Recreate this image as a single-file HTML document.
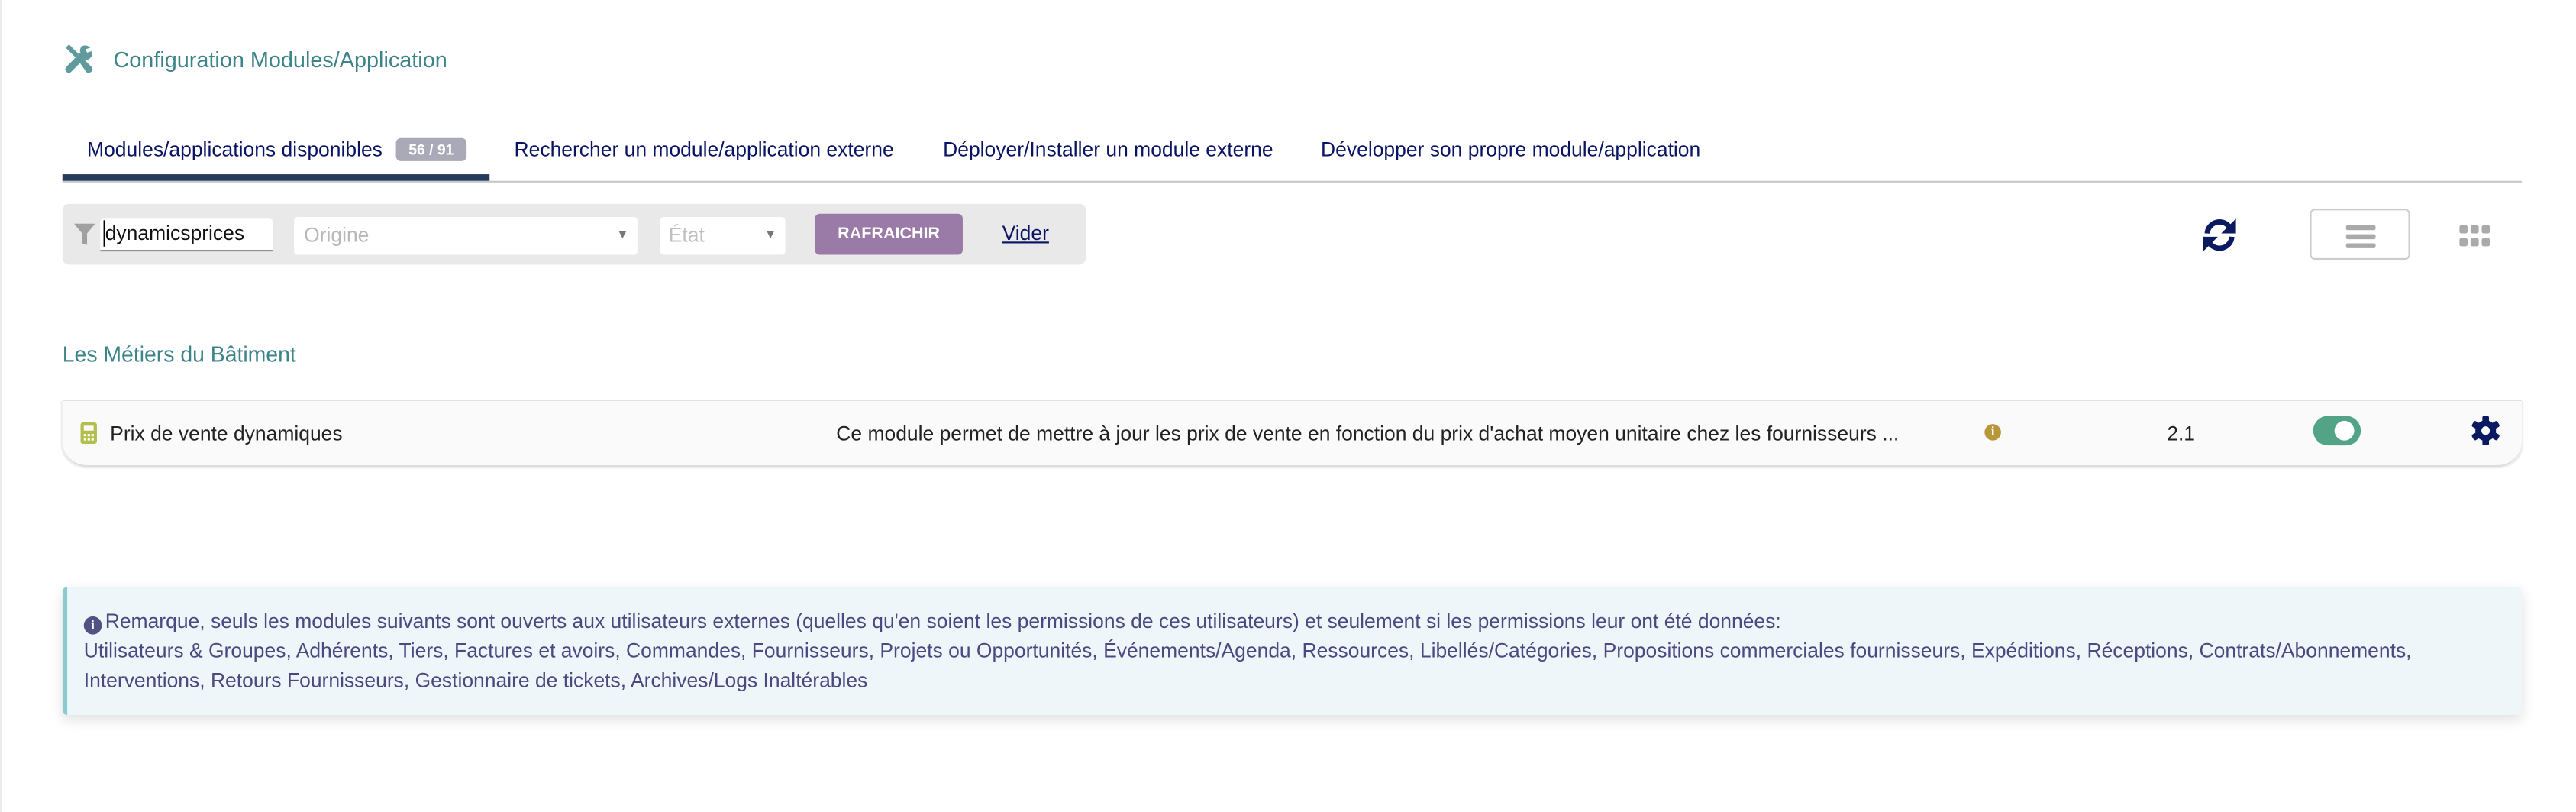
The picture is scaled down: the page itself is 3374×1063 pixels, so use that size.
<!DOCTYPE html>
<html><head><meta charset="utf-8"><style>
html,body{margin:0;padding:0;background:#fff;width:3374px;height:1062px;overflow:hidden}
#w{position:absolute;left:0;top:0;width:1568px;height:494px;transform:scale(2.1518);transform-origin:0 0;font-family:"Liberation Sans",Arial,sans-serif}
.a{position:absolute;white-space:nowrap}
.tab{color:#0a1464;font-size:12.3px;top:84px}
</style></head><body><div id="w">
<div class="a" style="left:0;top:0;width:1px;height:494px;background:#ececec"></div>
<svg class="a" style="left:38px;top:26px" width="20" height="20" viewBox="0 0 20 20"><g fill="#5f9a9c"><path d="M2 3l2-2 6 6 -2 2z"/><path d="M9 10l2-2 7 7q1 2-1 3q-2 1-3-1z"/><path d="M12 2q3-1 5 1l-3 1 1 2 3-1q1 3-2 5q-2 1-3 0l-8 8q-2 1-3-1q-1-1 1-3l8-8q-1-2 1-4z"/></g></svg>
<div class="a" style="left:69px;top:29px;font-size:13.4px;color:#3d8489">Configuration Modules/Application</div>
<div class="a tab" style="left:53px">Modules/applications disponibles</div>
<div class="a" style="left:241px;top:84px;width:43px;height:14px;background:#a9a9b8;border-radius:3px;color:#fff;font-size:9px;font-weight:bold;text-align:center;line-height:14px">56 / 91</div>
<div class="a tab" style="left:313px">Rechercher un module/application externe</div>
<div class="a tab" style="left:574px">Déployer/Installer un module externe</div>
<div class="a tab" style="left:804px">Développer son propre module/application</div>
<div class="a" style="left:38px;top:109.5px;width:1497px;height:1px;background:#c8c8c8"></div>
<div class="a" style="left:38px;top:106px;width:260px;height:4px;background:#263a5c"></div>
<div class="a" style="left:38px;top:124px;width:623px;height:37px;background:#e9e9e9;border-radius:4px"></div>
<svg class="a" style="left:45px;top:136px" width="13" height="13" viewBox="0 0 13 13"><path d="M0 0h13l-5 6v7l-3-1v-6z" fill="#a0a0a0"/></svg>
<div class="a" style="left:61px;top:133px;width:105px;height:19px;background:#fff;border-bottom:1px solid #777;border-radius:2px 2px 0 0"></div>
<div class="a" style="left:64px;top:135px;font-size:12.3px;color:#111">dynamicsprices</div>
<div class="a" style="left:63px;top:134px;width:1px;height:16px;background:#000"></div>
<div class="a" style="left:179px;top:132px;width:209px;height:23px;background:#fff;border-radius:2px"></div>
<div class="a" style="left:185px;top:136px;font-size:12.3px;color:#b8b8b8">Origine</div>
<div class="a" style="left:375px;top:138px;font-size:8px;color:#777">▼</div>
<div class="a" style="left:402px;top:132px;width:76px;height:23px;background:#fff;border-radius:2px"></div>
<div class="a" style="left:407px;top:136px;font-size:12.3px;color:#c0c0c0">État</div>
<div class="a" style="left:465px;top:138px;font-size:8px;color:#777">▼</div>
<div class="a" style="left:496px;top:130px;width:90px;height:25px;background:#9a7aa6;border-radius:3px;color:#fff;font-size:10px;font-weight:bold;text-align:center;line-height:25px">RAFRAICHIR</div>
<div class="a" style="left:610px;top:135px;font-size:12.3px;color:#0a1464;text-decoration:underline">Vider</div>
<svg class="a" style="left:1340px;top:132px" width="22" height="22" viewBox="0 0 22 22"><g fill="none" stroke="#0a1a60" stroke-width="3.2"><path d="M3.5 10a7.5 7.5 0 0 1 13.5-4"/><path d="M18.5 12a7.5 7.5 0 0 1-13.5 4"/></g><path d="M21 1v9h-9z" fill="#0a1a60"/><path d="M1 21v-9h9z" fill="#0a1a60"/></svg>
<div class="a" style="left:1406px;top:127px;width:61px;height:31px;border:1px solid #ccc;border-radius:3px;box-sizing:border-box"></div>
<div class="a" style="left:1428px;top:137px;width:18px;height:2.6px;background:#aaa;border-radius:1px;box-shadow:0 5.5px 0 #aaa,0 11px 0 #aaa"></div>
<svg class="a" style="left:1497px;top:137px" width="20" height="14"><g fill="#aaa"><rect x="0" y="0" width="5" height="5" rx="1.2"/><rect x="6.8" y="0" width="5" height="5" rx="1.2"/><rect x="13.6" y="0" width="5" height="5" rx="1.2"/><rect x="0" y="7.8" width="5" height="5" rx="1.2"/><rect x="6.8" y="7.8" width="5" height="5" rx="1.2"/><rect x="13.6" y="7.8" width="5" height="5" rx="1.2"/></g></svg>
<div class="a" style="left:38px;top:208px;font-size:13.2px;color:#3d8489">Les Métiers du Bâtiment</div>
<div class="a" style="left:38px;top:243px;width:1497px;height:41px;background:#fafafa;border-top:1px solid #e2e2e2;border-bottom:1px solid #ddd;border-radius:0 0 15px 15px;box-sizing:border-box;box-shadow:-1px 1px 0 #eee,1px 1px 0 #eee"></div>
<svg class="a" style="left:49px;top:257px" width="11" height="13"><rect width="10" height="13" rx="1.5" fill="#b3bf4d"/><rect x="2" y="2" width="6" height="3" fill="#fafafa"/><g fill="#fafafa"><rect x="2" y="7" width="1.5" height="1.5"/><rect x="4.3" y="7" width="1.5" height="1.5"/><rect x="6.6" y="7" width="1.5" height="1.5"/><rect x="2" y="9.5" width="1.5" height="1.5"/><rect x="4.3" y="9.5" width="1.5" height="1.5"/><rect x="6.6" y="9.5" width="1.5" height="1.5"/></g></svg>
<div class="a" style="left:67px;top:257px;font-size:12.3px;color:#222">Prix de vente dynamiques</div>
<div class="a" style="left:509px;top:257px;font-size:12.3px;color:#222">Ce module permet de mettre à jour les prix de vente en fonction du prix d'achat moyen unitaire chez les fournisseurs ...</div>
<div class="a" style="left:1208px;top:258px;width:10px;height:10px;border-radius:50%;background:#b8963a;color:#fff;font-size:8px;font-weight:bold;text-align:center;line-height:10px;font-family:'Liberation Serif',serif">i</div>
<div class="a" style="left:1319px;top:257px;font-size:12.3px;color:#222">2.1</div>
<div class="a" style="left:1408px;top:253px;width:29px;height:18px;border-radius:9px;background:#53a487"></div>
<div class="a" style="left:1421px;top:256px;width:12px;height:12px;border-radius:50%;background:#fff"></div>
<svg class="a" style="left:1504px;top:253px" width="18" height="18" viewBox="0 0 18 18"><g fill="#0a1a60"><circle cx="9" cy="9" r="6.3"/><rect x="7" y="0" width="4" height="18" rx="1"/><rect x="7" y="0" width="4" height="18" rx="1" transform="rotate(60 9 9)"/><rect x="7" y="0" width="4" height="18" rx="1" transform="rotate(120 9 9)"/></g><circle cx="9" cy="9" r="2.6" fill="#fafafa"/></svg>
<div class="a" style="left:38px;top:357px;width:1497px;height:78px;background:#eef6fa;border-left:3px solid #8ccacd;border-radius:3px;box-sizing:border-box;box-shadow:0 3px 8px rgba(0,0,0,0.12)"></div>
<div class="a" style="left:51px;top:369px;font-size:12.3px;color:#4a4a80;line-height:18px">
<span style="display:inline-block;width:11px;height:11px;border-radius:50%;background:#4f5383;color:#fff;font-size:8px;font-weight:bold;text-align:center;line-height:11px;font-family:'Liberation Serif',serif;vertical-align:-1px;margin-right:2px">i</span>Remarque, seuls les modules suivants sont ouverts aux utilisateurs externes (quelles qu'en soient les permissions de ces utilisateurs) et seulement si les permissions leur ont été données:<br>
Utilisateurs &amp; Groupes, Adhérents, Tiers, Factures et avoirs, Commandes, Fournisseurs, Projets ou Opportunités, Événements/Agenda, Ressources, Libellés/Catégories, Propositions commerciales fournisseurs, Expéditions, Réceptions, Contrats/Abonnements,<br>
Interventions, Retours Fournisseurs, Gestionnaire de tickets, Archives/Logs Inaltérables</div>
</div></body></html>
